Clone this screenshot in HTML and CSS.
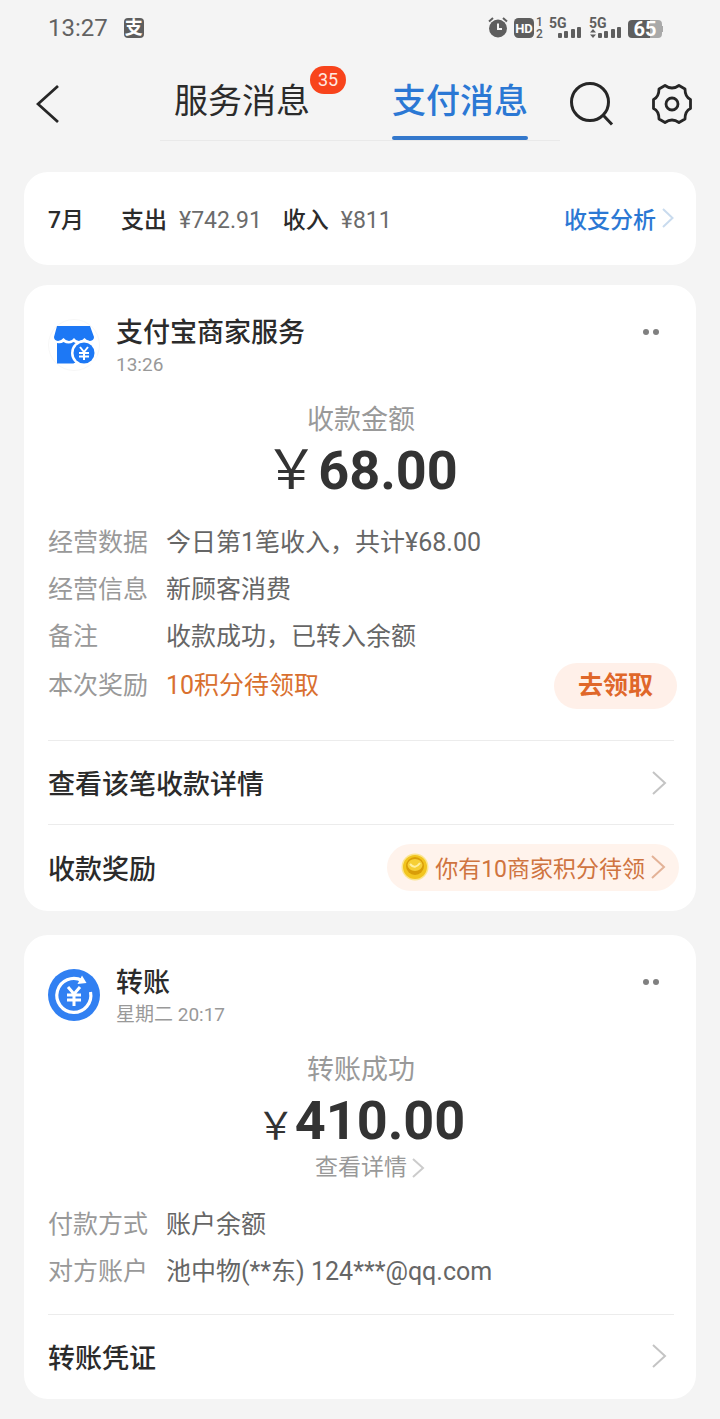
FILE: index.html
```html
<!DOCTYPE html>
<html lang="zh-CN">
<head>
<meta charset="utf-8">
<meta name="viewport" content="width=device-width, initial-scale=1">
<title>支付消息</title>
<link rel="stylesheet" href="styles.css">
</head>
<body>
<div class="status">
  <span class="status-time">13:27</span>
  <span class="status-app">支</span>
  <svg class="status-icons" width="176" height="24" viewBox="0 0 176 24" aria-hidden="true">
    <g fill="#5e5e5e">
      <circle cx="10" cy="12.500" r="9"/>
      <path d="M1 5.500L5 2M15 2l4 3.500" stroke="#5e5e5e" stroke-width="2" fill="none"/>
      <path d="M10 7.500v5.500h4" stroke="#f4f4f4" stroke-width="2" fill="none"/>
      <rect x="26" y="2" width="20" height="20" rx="4.500"/>
      <text x="36" y="17" class="t-hd">HD</text>
      <text x="48" y="10" class="t-sim">1</text>
      <text x="48" y="22" class="t-sim">2</text>
      <text x="61" y="12" class="t-net">5G</text>
      <text x="101" y="12" class="t-net">5G</text>
      <rect x="70" y="17" width="4" height="5" rx="1"/><rect x="76" y="15" width="4" height="7" rx="1"/><rect x="83" y="13" width="4" height="9" rx="1"/><rect x="89" y="11" width="4" height="11" rx="1"/>
      <rect x="110" y="17" width="4" height="5" rx="1"/><rect x="116" y="15" width="4" height="7" rx="1"/><rect x="123" y="13" width="4" height="9" rx="1"/><rect x="129" y="11" width="4" height="11" rx="1"/>
      <path d="M102 16.500l3-3.500 3 3.500zM102 18.500h6l-3 3.500z"/>
      <path d="M144 4h18v18h-18a4 4 0 0 1-4-4V8a4 4 0 0 1 4-4z"/>
      <path d="M162 4h8a4 4 0 0 1 4 4v2h1v6h-1v2a4 4 0 0 1-4 4h-8z" fill="#a9a9a9"/>
      <text x="157" y="20" class="t-bat">65</text>
    </g>
  </svg>
</div>

<header class="header">
  <button class="icon-btn back" type="button" aria-label="返回">
    <svg width="26" height="40" viewBox="0 0 26 40"><path d="M22 2L2 20l20 18" fill="none" stroke="#262626" stroke-width="2.800"/></svg>
  </button>
  <nav class="tabs">
    <a class="tab" href="#service">服务消息<span class="badge">35</span></a>
    <a class="tab tab-active" href="#pay" aria-current="page">支付消息</a>
  </nav>
  <div class="tools">
    <button class="icon-btn" type="button" aria-label="搜索">
      <svg width="44" height="44" viewBox="0 0 44 44" fill="none" stroke="#262626" stroke-width="3"><circle cx="20" cy="20" r="18.500"/><path d="M33 33l9 9.500"/></svg>
    </button>
    <button class="icon-btn" type="button" aria-label="设置">
      <svg width="40" height="42" viewBox="0 0 40 42" fill="none" stroke="#262626" stroke-width="2.800" stroke-linejoin="round"><circle cx="20" cy="21" r="6"/><path d="M13 2.500Q20 7.500 27 2.500L33 6Q33 14 38.500 16.500V25.500Q33 28 33 36L27 39.500Q20 34.500 13 39.500L7 36Q7 28 1.500 25.500V16.500Q7 14 7 6Z"/></svg>
    </button>
  </div>
</header>

<main class="feed">
  <section class="card summary">
    <p class="totals">
      <strong class="month">7月</strong>
      <strong>支出</strong><span class="sum">¥742.91</span>
      <strong>收入</strong><span class="sum">¥811</span>
    </p>
    <a class="analysis" href="#analysis">收支分析
      <svg width="12" height="20" viewBox="0 0 12 20"><path d="M1 1l9.500 9L1 19" fill="none" stroke="#c9dbee" stroke-width="2"/></svg>
    </a>
  </section>

  <article class="card">
    <header class="head">
      <svg class="avatar" width="52" height="52" viewBox="0 0 52 52" aria-hidden="true">
        <circle cx="26" cy="26" r="25.500" fill="#fff" stroke="#f7f7f7"/>
        <path d="M9 7h33l4 11q0 3.500-4 4-3 0-5.500-3-2.500 3-5.500 3t-5-3q-2 3-5 3t-5.500-3q-2.500 3-5.500 3-4-.5-4-4z" fill="#1d78f5"/>
        <path d="M9 24q4 1 6.500-1 5 3 10 0 5 3 10 0 4 2 8 1v20H9z" fill="#1d78f5"/>
        <circle cx="36" cy="34" r="13" fill="#fff"/>
        <path d="M9 36h13q1 5 4 8.500H9z" fill="#1d78f5"/>
        <circle cx="36" cy="34" r="10.500" fill="#1d78f5"/>
        <path d="M32 28l4 5 4-5M36 33v8M31 34h10M31 37.500h10" fill="none" stroke="#fff" stroke-width="2"/>
      </svg>
      <div class="who"><h2 class="name">支付宝商家服务</h2><time class="time">13:26</time></div>
      <button class="icon-btn more" type="button" aria-label="更多"><svg width="18" height="6" viewBox="0 0 18 6" fill="#808080"><circle cx="3" cy="3" r="3"/><circle cx="13" cy="3" r="3"/></svg></button>
    </header>
    <p class="caption">收款金额</p>
    <p class="amount"><span class="yen">￥</span>68.00</p>
    <dl class="rows">
      <div class="row"><dt>经营数据</dt><dd>今日第1笔收入，共计¥68.00</dd></div>
      <div class="row"><dt>经营信息</dt><dd>新顾客消费</dd></div>
      <div class="row"><dt>备注</dt><dd>收款成功，已转入余额</dd></div>
      <div class="row row-reward"><dt>本次奖励</dt><dd class="reward">10积分待领取</dd><dd class="claim-cell"><button class="claim" type="button">去领取</button></dd></div>
    </dl>
    <a class="link-row" href="#detail">查看该笔收款详情
      <svg class="chev" width="15" height="26" viewBox="0 0 15 26"><path d="M1 2l12 11L1 24" fill="none" stroke="#c4c4c4" stroke-width="2"/></svg>
    </a>
    <a class="link-row" href="#reward">收款奖励
      <span class="points">
        <svg width="28" height="28" viewBox="0 0 28 28" aria-hidden="true">
          <circle cx="14" cy="14" r="13.500" fill="#fbe590"/><circle cx="14" cy="14" r="12" fill="#f2c51f"/><circle cx="14" cy="13" r="9" fill="#d99d08"/><ellipse cx="14" cy="12" rx="7.500" ry="6" fill="#f6cf35"/><path d="M9 11q5 6 10-1" fill="none" stroke="#fff0a0" stroke-width="2"/>
        </svg>
        <span>你有10商家积分待领</span>
        <svg width="15" height="24" viewBox="0 0 15 24"><path d="M1 1l12 11L1 23" fill="none" stroke="#e3b297" stroke-width="2"/></svg>
      </span>
    </a>
  </article>

  <article class="card card-transfer">
    <header class="head">
      <svg class="avatar" width="52" height="52" viewBox="0 0 52 52" aria-hidden="true">
        <circle cx="26" cy="26" r="26" fill="#3180f2"/>
        <path d="M42.500 23A17 17 0 1 1 34 11.500" fill="none" stroke="#fff" stroke-width="3.200"/>
        <path d="M34 6.500l4.500 7.500-9 1z" fill="#fff"/>
        <path d="M20 18l6 7 6-7M26 25v12M19 26h14M19 31h14" fill="none" stroke="#fff" stroke-width="3"/>
      </svg>
      <div class="who"><h2 class="name">转账</h2><time class="time">星期二 20:17</time></div>
      <button class="icon-btn more" type="button" aria-label="更多"><svg width="18" height="6" viewBox="0 0 18 6" fill="#808080"><circle cx="3" cy="3" r="3"/><circle cx="13" cy="3" r="3"/></svg></button>
    </header>
    <p class="caption">转账成功</p>
    <p class="amount"><span class="yen yen-small">￥</span>410.00</p>
    <a class="view" href="#transfer">查看详情<svg width="13" height="22" viewBox="0 0 13 22"><path d="M1 2l10 9-10 9" fill="none" stroke="#ccc" stroke-width="2"/></svg></a>
    <dl class="rows">
      <div class="row"><dt>付款方式</dt><dd>账户余额</dd></div>
      <div class="row"><dt>对方账户</dt><dd>池中物(**东) 124***@qq.com</dd></div>
    </dl>
    <a class="link-row" href="#voucher">转账凭证
      <svg class="chev" width="15" height="26" viewBox="0 0 15 26"><path d="M1 2l12 11L1 24" fill="none" stroke="#c4c4c4" stroke-width="2"/></svg>
    </a>
  </article>
</main>
</body>
</html>
```
FILE: styles.css
```css
* { box-sizing: border-box; margin: 0; padding: 0; }

body {
  background: #f4f4f4;
  color: #2b2b2b;
  font-family: Roboto, "Noto Sans CJK SC", sans-serif;
}

a { color: inherit; text-decoration: none; }
button { border: 0; background: none; font: inherit; cursor: pointer; }
svg { display: block; flex: none; }

.status {
  display: flex;
  align-items: center;
  height: 56px;
  padding: 0 56px 0 48px;
  color: #626262;
}
.status-time { font-size: 24px; line-height: 28px; }
.status-app {
  width: 20px;
  height: 20px;
  margin-left: 16px;
  border-radius: 4px;
  background: #5e5e5e;
  color: #fff;
  font-size: 18px;
  font-weight: 700;
  line-height: 20px;
  text-align: center;
}
.status-icons { margin-left: auto; }
.t-hd { fill: #fff; font-size: 13px; font-weight: 700; text-anchor: middle; }
.t-sim { font-size: 12px; font-weight: 500; }
.t-net { font-size: 14px; font-weight: 700; }
.t-bat { fill: #fff; font-size: 20px; font-weight: 700; text-anchor: middle; }

.header {
  display: grid;
  grid-template-columns: 160px 1fr 160px;
}
.icon-btn { display: flex; }
.back { align-self: center; padding: 11px 0 0 36px; }
.tabs {
  display: flex;
  justify-content: space-between;
  padding: 0 32px 0 14px;
  border-bottom: 1px solid #e9e9e9;
}
.tab {
  position: relative;
  height: 84px;
  padding-top: 20px;
  font-size: 34px;
  line-height: 50px;
}
.tab-active {
  color: #2b78d4;
  font-weight: 500;
}
.tab-active::after {
  content: "";
  position: absolute;
  left: 0;
  right: 0;
  bottom: 0;
  height: 4px;
  border-radius: 2px;
  background: #3478cc;
}
.badge {
  position: absolute;
  top: 10px;
  left: 100%;
  width: 36px;
  border-radius: 14px;
  background: #f8441c;
  color: #ffe9e0;
  font-size: 18px;
  line-height: 28px;
  text-align: center;
}
.tools {
  display: flex;
  align-items: center;
  justify-content: space-between;
  padding: 11px 28px 0 10px;
}

.feed { padding: 31px 24px 20px; }
.card {
  padding: 32px 22px 0 24px;
  border-radius: 24px;
  background: #fff;
}
.summary {
  display: flex;
  align-items: center;
  height: 93px;
  margin-bottom: 20px;
  padding: 0 22px 2px 24px;
  font-size: 23px;
}
.totals { display: flex; align-items: baseline; }
.totals strong { font-weight: 500; }
.totals .month { margin-right: 37px; }
.sum { margin: 0 21px 0 12px; color: #6b6b6b; }
.analysis {
  display: flex;
  align-items: center;
  gap: 6px;
  margin-left: auto;
  color: #2b78d4;
  font-weight: 500;
}

.head { display: flex; align-items: flex-start; gap: 16px; }
.avatar { margin-top: 2px; }
.who { flex: 1; }
.name { padding-top: 1px; font-size: 27px; font-weight: 500; line-height: 30px; }
.time {
  display: block;
  margin-top: 5px;
  color: #999;
  font-size: 19px;
  line-height: 24px;
}
.more { padding: 12px 13px 12px 0; }

.caption {
  margin-top: 25px;
  color: #999;
  font-size: 27px;
  line-height: 36px;
  text-align: center;
}
.amount {
  display: flex;
  align-items: baseline;
  justify-content: center;
  height: 65px;
  font-size: 54px;
  font-weight: 700;
  line-height: 65px;
  color: #333;
}
.yen {
  font-family: "Noto Sans CJK SC", sans-serif;
  font-weight: 400;
  line-height: 1;
}
.yen-small { font-size: 38px; }
.view {
  display: flex;
  align-items: center;
  justify-content: center;
  gap: 5px;
  padding-left: 18px;
  color: #999;
  font-size: 23px;
  line-height: 30px;
}

.rows { padding: 16px 0 31px; font-size: 25px; line-height: 47px; }
.row { display: flex; align-items: center; }
.row dt { width: 118px; color: #999; }
.row dd { color: #666; }
.row .reward { color: #d9702f; }
.row-reward { margin-top: 3px; line-height: 46px; }
.claim-cell { margin: 0 -3px 0 auto; }
.claim {
  display: block;
  padding: 0 24px;
  border-radius: 23px;
  background: #fff0e9;
  color: #e0672a;
  font-weight: 700;
}

.link-row {
  display: flex;
  align-items: center;
  justify-content: space-between;
  height: 84px;
  border-top: 1px solid #ececec;
  font-size: 27px;
  font-weight: 500;
}
.chev { margin-right: 7px; }
.link-row:last-child { height: 87px; padding-bottom: 2px; }
.card-transfer .link-row:last-child { height: 85px; }
.points {
  display: flex;
  align-items: center;
  gap: 6px;
  height: 47px;
  margin-right: -5px;
  padding: 0 13px 0 14px;
  border-radius: 24px;
  background: #fff3ec;
  color: #cf7440;
  font-size: 23px;
  font-weight: 400;
}
.card-transfer { margin-top: 24px; }
.card-transfer .rows { padding: 18px 0 19px; }
```
